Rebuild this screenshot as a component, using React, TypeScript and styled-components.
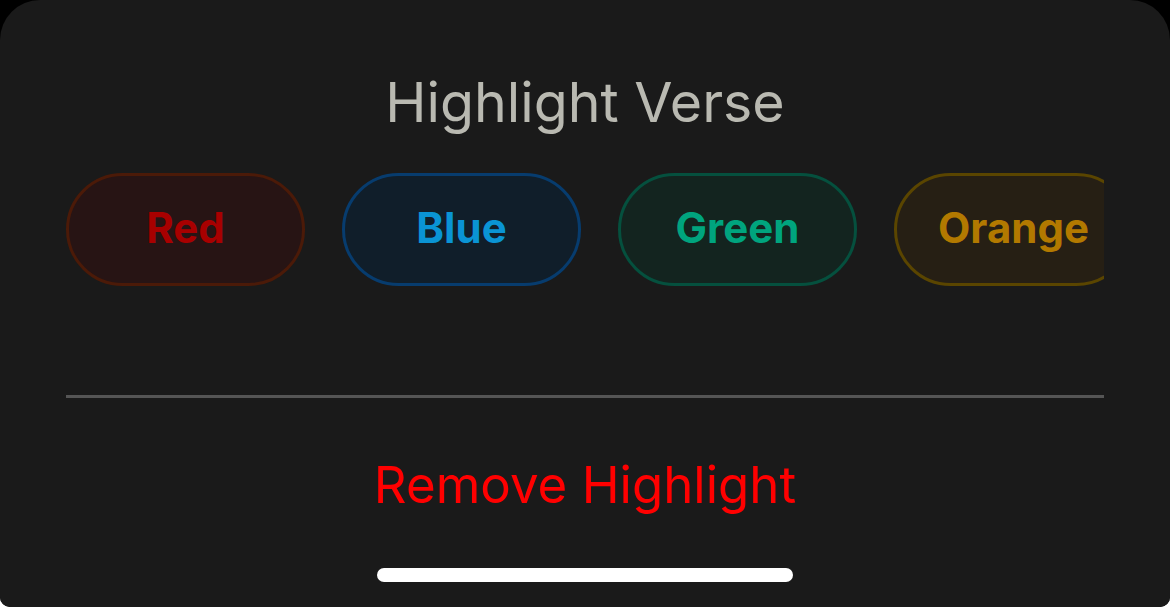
import React from "react";
import styled, { createGlobalStyle } from "styled-components";

const Global = createGlobalStyle`
  html, body { margin: 0; padding: 0; background: #ffffff; }
  body { font-family: Inter, "Noto Sans", sans-serif; }
`;

const Frame = styled.div`
  width: 1170px;
  height: 607px;
  background: #000000;
  border-radius: 0 0 10px 10px;
  overflow: hidden;
`;

const Sheet = styled.div`
  height: 100%;
  box-sizing: border-box;
  background: #1a1a1a;
  border-radius: 40px 40px 0 0;
  padding: 74px 66px 0;
  display: flex;
  flex-direction: column;
  align-items: stretch;
`;

const Title = styled.h1`
  margin: 0;
  font-family: Inter, sans-serif;
  font-weight: 400;
  font-size: 55.5px;
  line-height: 56px;
  color: #b9b9b1;
  text-align: center;
`;

const ChipRow = styled.div`
  margin-top: 43px;
  display: flex;
  gap: 37px;
  overflow: hidden;
`;

type ChipProps = { $bg: string; $border: string; $fg: string };

const Chip = styled.button<ChipProps>`
  flex: 0 0 239px;
  height: 113px;
  box-sizing: border-box;
  border-radius: 57px;
  border: 3px solid ${(p) => p.$border};
  background: ${(p) => p.$bg};
  color: ${(p) => p.$fg};
  font-family: Inter, sans-serif;
  font-weight: 700;
  font-size: 42px;
  line-height: 1;
  display: flex;
  align-items: center;
  justify-content: center;
  padding: 0 0 3px;
`;

const Divider = styled.div`
  margin-top: 109px;
  height: 3px;
  background: #555555;
`;

const RemoveButton = styled.div`
  margin-top: 62px;
  font-family: Inter, sans-serif;
  font-weight: 400;
  font-size: 51px;
  line-height: 50px;
  color: #ff0000;
  text-align: center;
`;

const HomeIndicator = styled.div`
  margin: 58px auto 0;
  width: 416px;
  height: 14px;
  border-radius: 7px;
  background: #ffffff;
`;

const chips = [
  { label: "Red", bg: "#271414", border: "#4b1a08", fg: "#a80000" },
  { label: "Blue", bg: "#101e2a", border: "#073c6e", fg: "#0a94d4" },
  { label: "Green", bg: "#13241f", border: "#05503e", fg: "#00a47e" },
  { label: "Orange", bg: "#261f14", border: "#5a4500", fg: "#b27900" },
];

export default function App() {
  return (
    <>
      <Global />
      <Frame>
        <Sheet>
          <Title>Highlight Verse</Title>
          <ChipRow>
            {chips.map((c) => (
              <Chip key={c.label} $bg={c.bg} $border={c.border} $fg={c.fg}>
                {c.label}
              </Chip>
            ))}
          </ChipRow>
          <Divider />
          <RemoveButton>Remove Highlight</RemoveButton>
          <HomeIndicator />
        </Sheet>
      </Frame>
    </>
  );
}
